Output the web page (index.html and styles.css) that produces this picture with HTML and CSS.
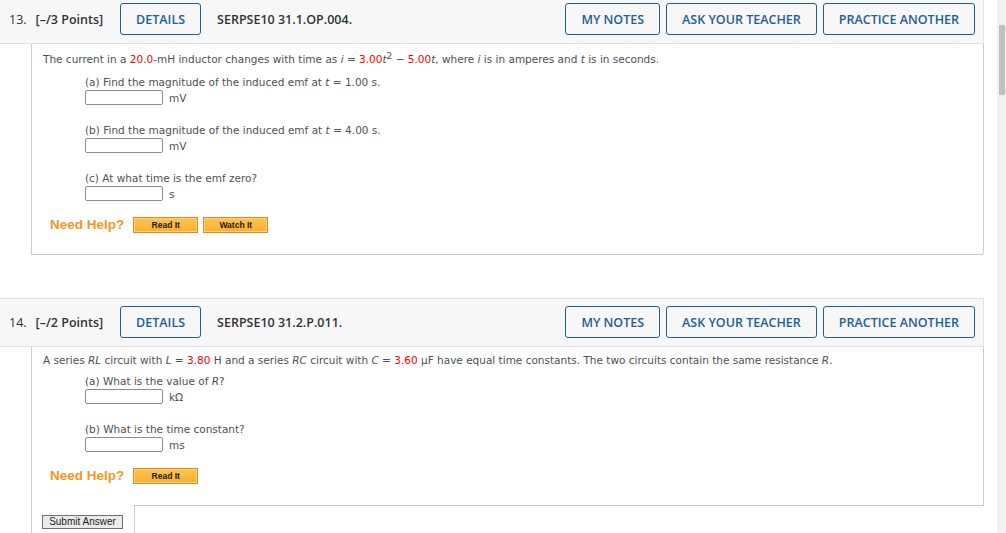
FILE: index.html
```html
<!DOCTYPE html>
<html lang="en">
<head>
<meta charset="utf-8">
<title>WebAssign</title>
<link rel="stylesheet" href="styles.css">
</head>
<body>
<main class="main">
  <section class="question q-first">
    <header class="qhead">
      <span class="qnum">13.</span>
      <span class="qpts">[–/3 Points]</span>
      <button class="hbtn">DETAILS</button>
      <span class="qid">SERPSE10 31.1.OP.004.</span>
      <div class="hright">
        <button class="hbtn">MY NOTES</button>
        <button class="hbtn">ASK YOUR TEACHER</button>
        <button class="hbtn">PRACTICE ANOTHER</button>
      </div>
    </header>
    <div class="qpanel qpanel-closed">
      <div class="qcontent qcontent-sup">
        <p class="stem">The current in a <span class="red">20.0</span>-mH inductor changes with time as <i>i</i> = <span class="red">3.00</span><i>t</i><sup>2</sup> − <span class="red">5.00</span><i>t</i>, where <i>i</i> is in amperes and <i>t</i> is in seconds.</p>
        <div class="part">
          <p class="plabel">(a) Find the magnitude of the induced emf at <i>t</i> = 1.00 s.</p>
          <div class="answer"><input class="ibox" type="text"><span class="unit">mV</span></div>
        </div>
        <div class="part part-gap">
          <p class="plabel">(b) Find the magnitude of the induced emf at <i>t</i> = 4.00 s.</p>
          <div class="answer"><input class="ibox" type="text"><span class="unit">mV</span></div>
        </div>
        <div class="part part-gap">
          <p class="plabel">(c) At what time is the emf zero?</p>
          <div class="answer"><input class="ibox" type="text"><span class="unit">s</span></div>
        </div>
        <div class="help">
          <span class="needhelp">Need Help?</span>
          <button class="obtn">Read It</button>
          <button class="obtn">Watch It</button>
        </div>
      </div>
    </div>
  </section>

  <section class="question">
    <header class="qhead">
      <span class="qnum">14.</span>
      <span class="qpts">[–/2 Points]</span>
      <button class="hbtn">DETAILS</button>
      <span class="qid">SERPSE10 31.2.P.011.</span>
      <div class="hright">
        <button class="hbtn">MY NOTES</button>
        <button class="hbtn">ASK YOUR TEACHER</button>
        <button class="hbtn">PRACTICE ANOTHER</button>
      </div>
    </header>
    <div class="qpanel qpanel-open">
      <div class="qcontent qcontent-side">
        <p class="stem">A series <i>RL</i> circuit with <i>L</i> = <span class="red">3.80</span> H and a series <i>RC</i> circuit with <i>C</i> = <span class="red">3.60</span> µF have equal time constants. The two circuits contain the same resistance <i>R</i>.</p>
        <div class="part">
          <p class="plabel">(a) What is the value of <i>R</i>?</p>
          <div class="answer"><input class="ibox" type="text"><span class="unit">kΩ</span></div>
        </div>
        <div class="part part-gap">
          <p class="plabel">(b) What is the time constant?</p>
          <div class="answer"><input class="ibox" type="text"><span class="unit">ms</span></div>
        </div>
        <div class="help">
          <span class="needhelp">Need Help?</span>
          <button class="obtn">Read It</button>
        </div>
      </div>
      <div class="qfoot">
        <div class="fleft"><button class="submit">Submit Answer</button></div>
        <div class="fright"></div>
      </div>
    </div>
  </section>
</main>
<aside class="scrollbar"><div class="thumb"></div></aside>
</body>
</html>
```

FILE: styles.css
```css
* { box-sizing: border-box; }

html, body {
  margin: 0;
  height: 100%;
  overflow: hidden;
  background: #fff;
}

body {
  display: flex;
  font-family: "Open Sans", "Liberation Sans", sans-serif;
}

.main {
  flex: 1;
  min-width: 0;
  padding-right: 13px;
}

.scrollbar {
  flex: none;
  width: 9px;
  background: #f1f1f1;
  padding: 25px 1px 0 2px;
}

.thumb {
  height: 70px;
  background: #c1c1c1;
}

.q-first { margin-top: -5px; }
.question + .question { margin-top: 43px; }

/* header */
.qhead {
  display: flex;
  align-items: center;
  background: #f7f7f7;
  border: 1px solid #e1e1e1;
  border-left: none;
  padding: 7px 8px 8px 9px;
  color: #333;
  font-size: 12.5px;
}

.qnum { font-weight: 400; margin-right: 9px; }
.qpts { font-weight: 600; margin-right: 17px; }
.qid { font-weight: 600; margin-left: 16px; }

.hbtn {
  height: 32px;
  padding: 0 15px;
  border: 1px solid #1d6094;
  border-radius: 3px;
  background: #f7f7f7;
  color: #1d6094;
  font-family: "Open Sans", "Liberation Sans", sans-serif;
  font-size: 12.5px;
  font-weight: 600;
}

.hright {
  margin-left: auto;
  display: flex;
  gap: 6px;
}

/* panel */
.qpanel {
  margin-left: 31px;
  border-left: 1px solid #cccccc;
}

.qpanel-closed {
  border-right: 1px solid #cccccc;
  border-bottom: 1px solid #cccccc;
  border-bottom-right-radius: 3px;
}

.qcontent {
  padding: 6px 0 21px 11px;
  font-family: "DejaVu Sans", Verdana, sans-serif;
  font-size: 10.5px;
  line-height: 14px;
  color: #4f4f4f;
}

.qcontent-sup { padding-top: 8px; }
.qcontent-sup .stem { padding-bottom: 2px; }

.qcontent-side {
  border-right: 1px solid #cccccc;
}

.stem, .plabel { margin: 0; }

sup {
  font-size: 9px;
  line-height: 0;
}

.red { color: #f20000; }

.part {
  margin-top: 7px;
  margin-left: 42px;
}

.part-gap { margin-top: 18px; }

.answer {
  display: flex;
  align-items: center;
  margin-top: 1px;
  height: 15px;
}

.ibox {
  width: 78px;
  height: 15px;
  margin: 0;
  padding: 0;
  border: 1px solid #8c8c8c;
  border-radius: 2px;
  background: #fff;
}

.unit { margin-left: 6px; }

.help {
  display: flex;
  align-items: center;
  margin-top: 16px;
  margin-left: 7px;
  height: 16px;
}

.needhelp {
  font-family: "Liberation Sans", Arial, sans-serif;
  font-weight: 700;
  font-size: 13.5px;
  color: #f7941d;
  margin-right: 9px;
}

.obtn {
  width: 65px;
  height: 16px;
  margin: 0 5px 0 0;
  padding: 0;
  border: 1px solid #e4861f;
  box-shadow: inset 0 0 0 1px #ffd47a;
  background: linear-gradient(#fdc552, #f9ad31);
  font-family: "Liberation Sans", Arial, sans-serif;
  font-weight: 700;
  font-size: 8.5px;
  color: #1c1c1c;
}

/* footer */
.qfoot { display: flex; }

.fleft {
  width: 102px;
  padding: 10px 0 0 10px;
}

.submit {
  display: block;
  width: 81px;
  height: 14px;
  margin: 0;
  padding: 0;
  border: 1px solid #707070;
  background: #ebebeb;
  font-family: "Liberation Sans", Arial, sans-serif;
  font-size: 10px;
  color: #222;
  line-height: 12px;
}

.fright {
  flex: 1;
  height: 40px;
  border-top: 1px solid #cccccc;
  border-left: 1px solid #cccccc;
}
```
